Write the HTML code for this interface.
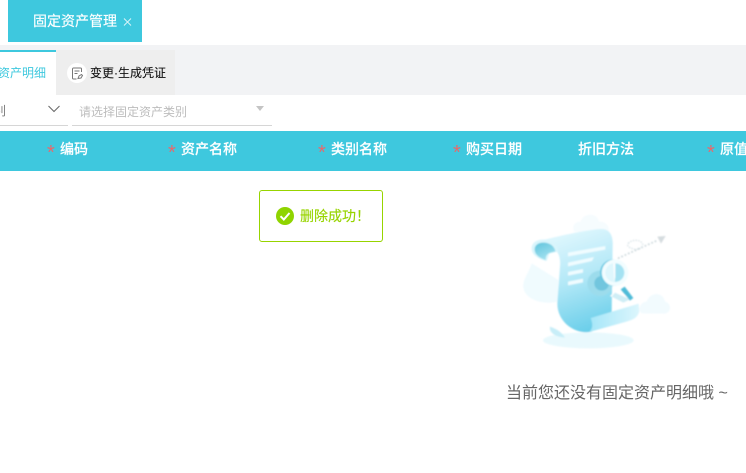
<!DOCTYPE html>
<html lang="zh">
<head>
<meta charset="utf-8">
<title>固定资产管理</title>
<style>
html,body{margin:0;padding:0;width:746px;height:473px;overflow:hidden;background:#fff}
body{position:relative;font-family:"Liberation Sans","Noto Sans CJK SC",sans-serif}
.a{position:absolute;white-space:nowrap}
.th{top:131px;height:40px;line-height:36px;color:#fff;font-size:14px;font-weight:500;-webkit-text-stroke:.15px #fff}
.st{color:#e9686b;top:131px;height:44px;line-height:44px;font-size:20px}
</style>
</head>
<body>
<div class="a" style="left:8px;top:0;width:134px;height:42px;background:#3ec8de"></div>
<div class="a" style="left:33px;top:0;height:42px;line-height:42px;font-size:14px;color:#fff;-webkit-text-stroke:.15px #fff">固定资产管理</div>
<svg class="a" style="left:123px;top:18px" width="9" height="9" viewBox="0 0 9 9"><path d="M1 .5L8 7.500M8 .5L1 7.500" stroke="#fff" stroke-width=".9" fill="none" opacity=".85"/></svg>

<div class="a" style="left:0;top:45px;width:746px;height:50px;background:#f2f3f5"></div>
<div class="a" style="left:0;top:50px;width:56px;height:45px;background:#fff;border-top:2px solid #3ec8de;box-sizing:border-box"></div>
<div class="a" style="left:-2px;top:63px;height:20px;line-height:20px;font-size:12px;color:#3ec8de">资产明细</div>
<div class="a" style="left:56px;top:50px;width:119px;height:45px;background:#eeeeee"></div>
<div class="a" style="left:67px;top:63px;width:20px;height:20px;border-radius:50%;background:#fff"></div>
<svg class="a" style="left:71px;top:67px" width="13" height="13" viewBox="0 0 13 13" fill="none" stroke="#777" stroke-width="1"><path d="M10.500 5V2a1 1 0 0 0-1-1h-7a1 1 0 0 0-1 1v9a1 1 0 0 0 1 1h3"/><path d="M3.500 4h5M3.500 6.500h3"/><path d="M7 11.500l1-2.500 2.500-1.500 1 1-1.500 2.500z"/></svg>
<div class="a" style="left:90px;top:63px;height:20px;line-height:20px;font-size:12px;color:#111;-webkit-text-stroke:.1px #111">变更·生成凭证</div>

<div class="a" style="left:-6px;top:101px;height:20px;line-height:20px;font-size:12px;color:#777">别</div>
<svg class="a" style="left:48px;top:105px" width="12" height="8" viewBox="0 0 12 8"><path d="M.5 1L6 6.500 11.500 1" stroke="#666" stroke-width="1" fill="none"/></svg>
<div class="a" style="left:0;top:125px;width:68px;height:1px;background:#d6d6d6"></div>
<div class="a" style="left:79px;top:102px;height:20px;line-height:20px;font-size:12px;color:#bdbdbd">请选择固定资产类别</div>
<svg class="a" style="left:256px;top:106px" width="8" height="5" viewBox="0 0 8 5"><path d="M0 0H8L4 5z" fill="#c4c4c4"/></svg>
<div class="a" style="left:72px;top:125px;width:200px;height:1px;background:#d6d6d6"></div>

<div class="a" style="left:0;top:131px;width:746px;height:40px;background:#3ec8de"></div>
<div class="a st" style="left:47px">*</div><div class="a th" style="left:60px">编码</div>
<div class="a st" style="left:168px">*</div><div class="a th" style="left:181px">资产名称</div>
<div class="a st" style="left:318px">*</div><div class="a th" style="left:331px">类别名称</div>
<div class="a st" style="left:453px">*</div><div class="a th" style="left:466px">购买日期</div>
<div class="a th" style="left:578px">折旧方法</div>
<div class="a st" style="left:707px">*</div><div class="a th" style="left:720px">原值</div>

<div class="a" style="left:259px;top:190px;width:124px;height:52px;box-sizing:border-box;border:1px solid #97d400;border-radius:3px;background:#fff"></div>
<svg class="a" style="left:276px;top:207px" width="18" height="18" viewBox="0 0 18 18"><circle cx="9" cy="9" r="9" fill="#8fd400"/><path d="M4.500 9.200L7.800 12.500 13.500 6" stroke="#fff" stroke-width="2" fill="none"/></svg>
<div class="a" style="left:300px;top:206px;height:20px;line-height:20px;font-size:14px;color:#97d400;-webkit-text-stroke:.15px #97d400">删除成功！</div>

<svg class="a" style="left:500px;top:200px" width="190" height="160" viewBox="0 0 570 480">
<defs>
<linearGradient id="b" x1="0.300" y1="0" x2="0.550" y2="1"><stop offset="0" stop-color="#e2f8fe"/><stop offset=".5" stop-color="#b3e8f7"/><stop offset="1" stop-color="#6ccfea"/></linearGradient>
<linearGradient id="c" x1="0" y1="0" x2="0.500" y2="1"><stop offset="0" stop-color="#5fc4dc"/><stop offset="1" stop-color="#a4e2f0"/></linearGradient>
<linearGradient id="d" x1="0" y1="0" x2="1" y2="0"><stop offset="0" stop-color="#a5e6f8"/><stop offset="1" stop-color="#dcf6fd"/></linearGradient>
<filter id="s"><feGaussianBlur stdDeviation="2"/></filter>
</defs>
<g filter="url(#s)">
<path d="M222 95c-8-20 5-30 20-30 5-25 50-30 55 0 20-2 35 15 28 35z" fill="#f6fcfe"/>
<path d="M95 190L175 240V305C130 315 75 300 70 262c-2-25 15-40 25-72z" fill="#f0fbfe"/>
<path d="M425 340c-15-15 0-35 15-35 10-30 50-30 55 0 20 5 20 32 0 36z" fill="#f2fbfe"/>
<ellipse cx="265" cy="421" rx="136" ry="24" fill="#e9f9fd"/>
<path d="M150 380c-3 16 12 30 45 33-10-18-30-28-45-33z" fill="#c8eef8"/>
<path d="M125 121C190 105 260 90 300 87c28-2 40 18 38 50L335 335 275 395c-45 10-103-25-103-85l8-110c4-40-15-65-55-79z" fill="url(#b)"/>
<path d="M95 145c0-20 20-28 40-26 25 2 38 18 40 36l-16 3-8 2-3 1-8 22c-25-6-45-18-45-38z" fill="#d9f5fc"/>
<path d="M104 148c0-14 14-22 30-20 20 2 30 14 32 26l-15 4c-10 3-14 10-14 22-18-6-33-16-33-32z" fill="url(#c)"/>
<path d="M272 354L416 311l2 24c-8 22-18 24-60 36l-90 25c12-14 10-25 4-42z" fill="url(#d)"/>
<path d="M204 158L316 138v11l-112 20zM204 188l78-17-6 12-72 16zM204 216l45-9v11l-45 9zM204 245l45-9v11l-45 9z" fill="#f0fcff"/>
<circle cx="300" cy="250" r="38" fill="#9cdcec"/>
<circle cx="305" cy="250" r="22" fill="#72c6de"/>
<path d="M345 275l50 18-25 15-40-20z" fill="#fff"/>
<path d="M345 278l45 20-20 10-35-18z" fill="#cfeef6"/>
<path d="M362 268l12-8 26 34-10 8z" fill="#4fbcd8"/>
<circle cx="340" cy="218" r="40" fill="#5fc6e0"/>
<circle cx="345" cy="218" r="40" fill="#f2fdff"/>
<circle cx="345" cy="218" r="28" fill="#a4e2f2"/>
<path d="M345 190a28 28 0 0 0 0 56z" fill="#dff7fd"/>
<path d="M340 190l6 0 0 42-3 12z" fill="#fff"/>
<path d="M354 175L470 122" stroke="#c9d6da" stroke-width="5" stroke-dasharray="5 6" fill="none"/>
<path d="M472 110L497 108 483 131z" fill="#d5dcdf"/>
<path d="M385 130c10-12 35-12 42 0 6 12-14 22-30 16-10-4-18-8-12-16z" stroke="#d6e2e6" stroke-width="4" stroke-dasharray="4 4" fill="none"/>
</g>
</svg>

<div class="a" style="left:506px;top:382px;height:24px;line-height:24px;font-size:16px;color:#666">当前您还没有固定资产明细哦 ~</div>
</body>
</html>
